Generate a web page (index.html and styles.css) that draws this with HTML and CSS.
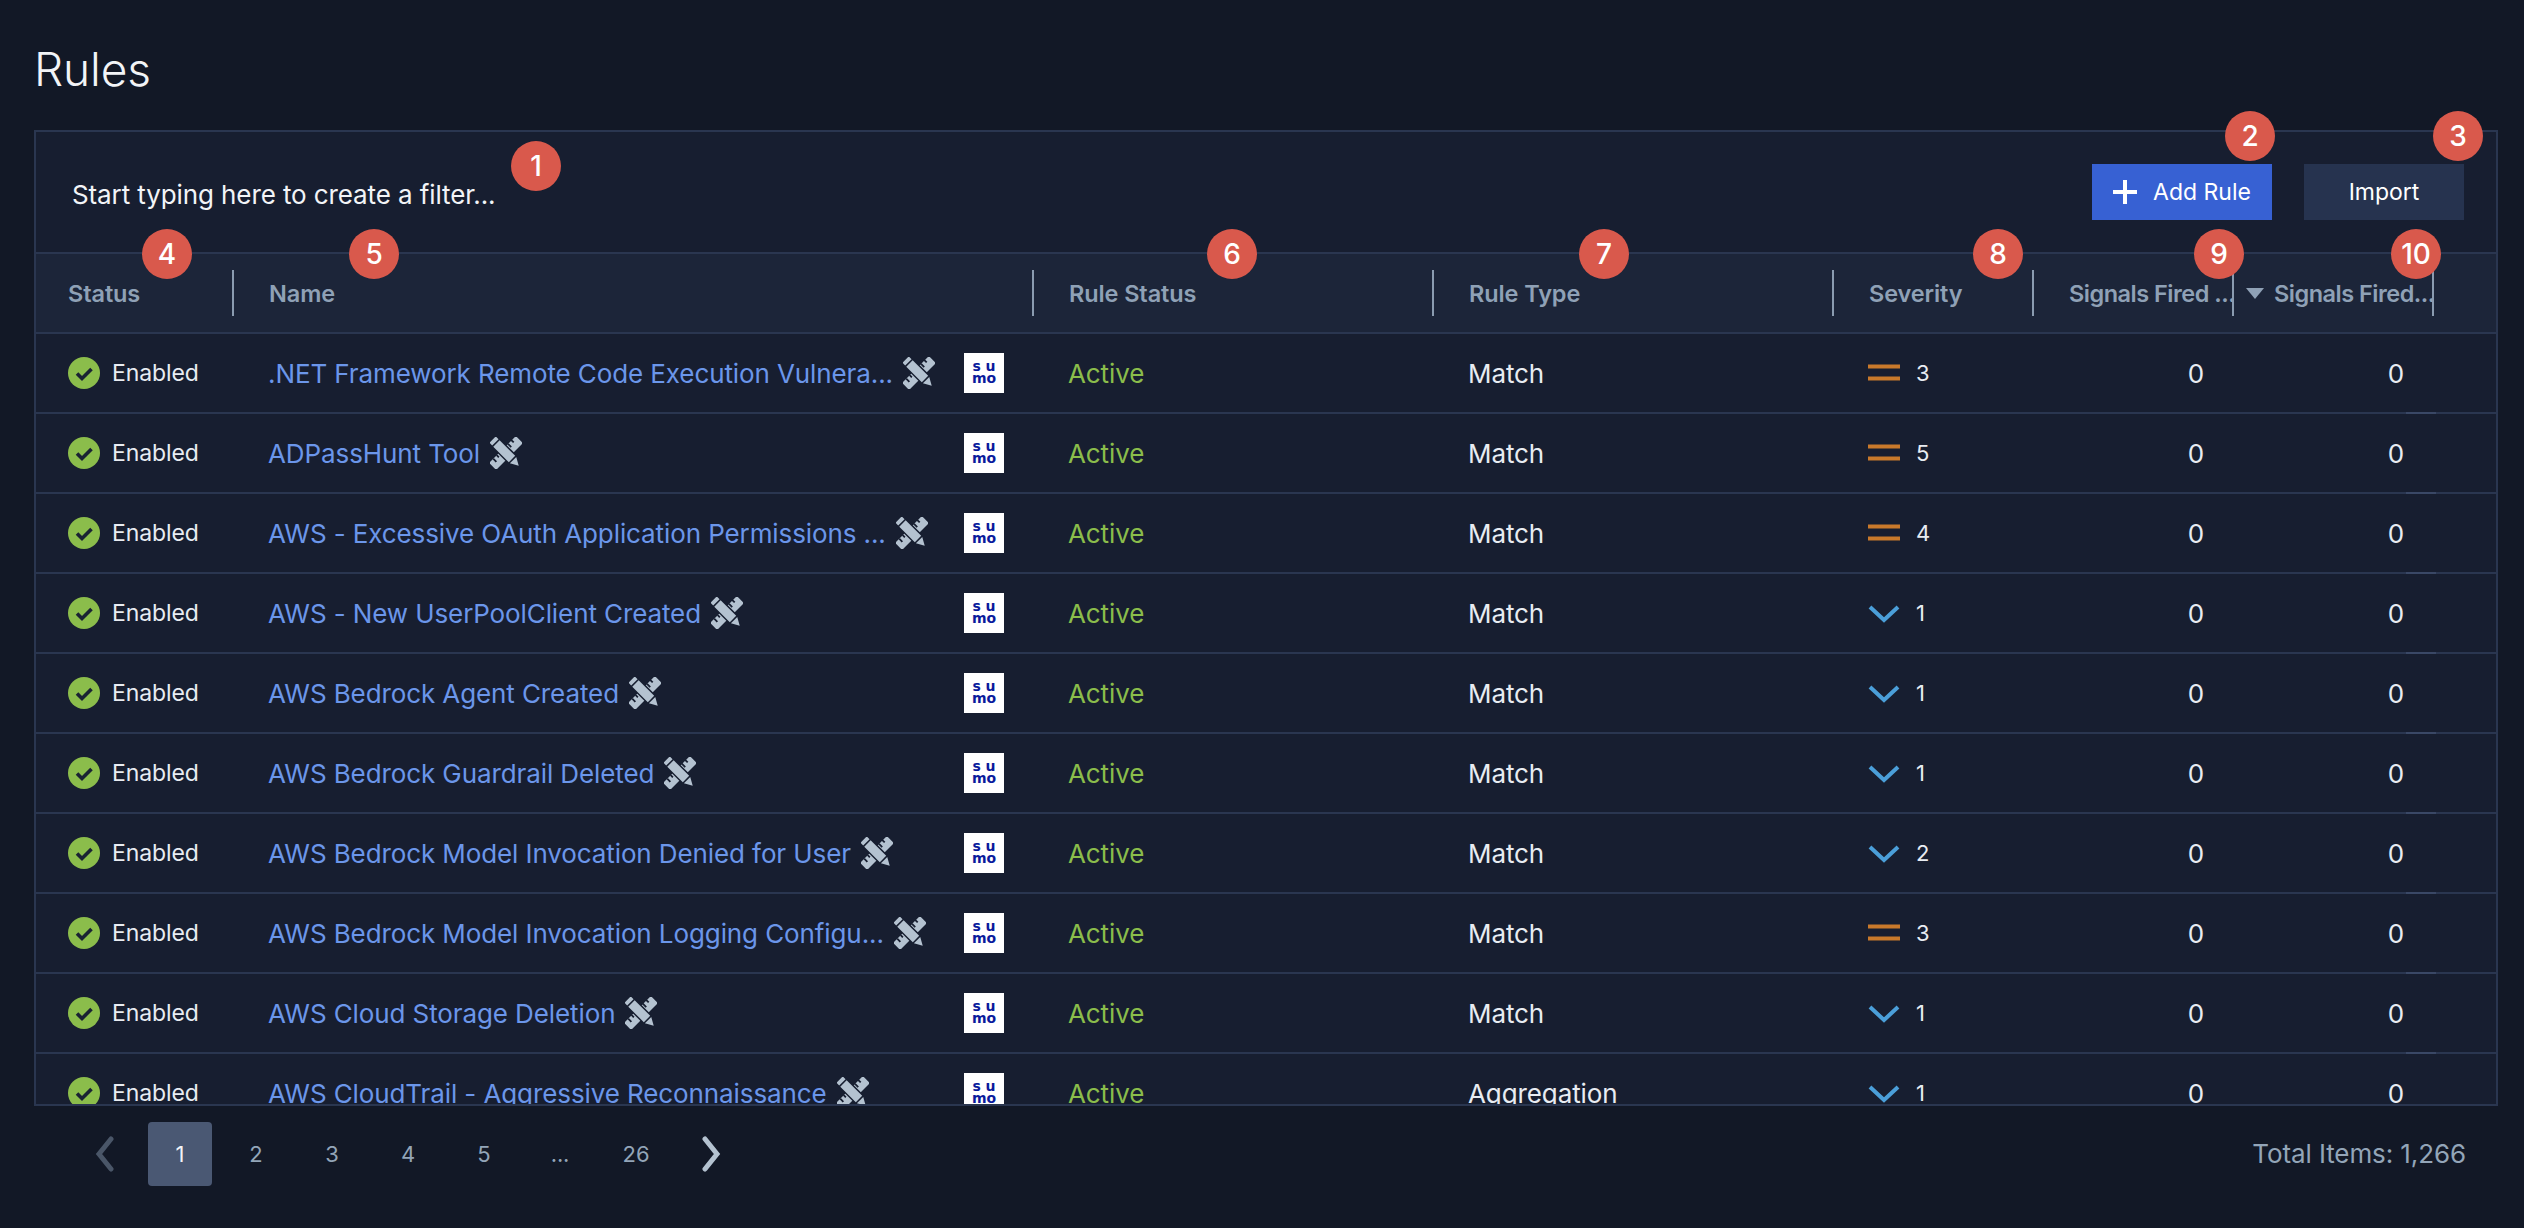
FILE: index.html
```html
<!DOCTYPE html>
<html lang="en">

<head>
    <meta charset="UTF-8">
    <meta name="viewport" content="width=device-width, initial-scale=1.0">
    <title>Rules</title>
    <link rel="stylesheet" href="styles.css">
</head>

<body>
    <svg class="defs" width="0" height="0">
        <defs>
            <symbol id="tools" viewBox="0 0 32 32">
                <g transform="rotate(-45 16 16)">
                    <path d="M-3 11h38v10H-3zM2 11v4.500h1.800V11zM7 11v3h1.800v-3zM12 11v4.500h1.800V11zM18 11v3h1.800v-3zM23 11v4.500h1.800V11zM28 11v3h1.800v-3z" fill="#b4c2d0" fill-rule="evenodd" />
                </g>
                <g transform="rotate(45 16 16)">
                    <path d="M-2 10h27v12H-2z" fill="#171e30" />
                    <path d="M-3 11.500h4v9h-4zM2.500 11.500h22v9h-22zM26 11.500l8 4.500-8 4.500z" fill="#b4c2d0" />
                </g>
            </symbol>
            <symbol id="check" viewBox="0 0 32 32">
                <circle cx="16" cy="16" r="16" fill="#8bbd4b" />
                <path d="M9 16.500l5 5 9.500-9.500" fill="none" stroke="#1a2233" stroke-width="3.600" />
            </symbol>
            <symbol id="medium" viewBox="0 0 32 32">
                <path d="M0 7.500h32v4H0zM0 19.500h32v4H0z" fill="#c8792b" />
            </symbol>
            <symbol id="low" viewBox="0 0 32 32">
                <path d="M2 10l14 13 14-13" fill="none" stroke="#4b9fd9" stroke-width="4" />
            </symbol>
        </defs>
    </svg>

    <div class="page">
        <h1>Rules</h1>

        <div class="panel">
            <div class="toolbar">
                <div class="filter">Start typing here to create a filter...</div>
                <div class="actions">
                    <button class="btn btn-primary">
                        <svg class="plus" viewBox="0 0 24 24" width="24" height="24">
                            <path d="M10 0h4v10h10v4H14v10h-4V14H0v-4h10z" fill="#fff" />
                        </svg>
                        Add Rule
                    </button>
                    <button class="btn btn-secondary">Import</button>
                </div>
            </div>

            <div class="cols head">
                <div class="th"><span class="th-in">Status</span></div>
                <div class="th"><span class="th-in">Name</span></div>
                <div class="th"><span class="th-in">Rule Status</span></div>
                <div class="th"><span class="th-in">Rule Type</span></div>
                <div class="th"><span class="th-in">Severity</span></div>
                <div class="th th-tight"><span class="th-in">Signals Fired ...</span></div>
                <div class="th th-tight th-sorted"><span class="th-in"><i class="sort"></i>Signals Fired...</span></div>
            </div>

            <div class="rows">
                <div class="cols row">
                    <div class="cell status"><svg class="ico"><use href="#check" /></svg>Enabled</div>
                    <div class="cell name"><a>.NET Framework Remote Code Execution Vulnera...</a><svg class="ico"><use href="#tools" /></svg><span class="sumo">s u<br>mo</span></div>
                    <div class="cell active">Active</div>
                    <div class="cell">Match</div>
                    <div class="cell sev"><svg class="ico"><use href="#medium" /></svg>3</div>
                    <div class="cell num">0</div>
                    <div class="cell num">0</div>
                </div>
                <div class="cols row">
                    <div class="cell status"><svg class="ico"><use href="#check" /></svg>Enabled</div>
                    <div class="cell name"><a>ADPassHunt Tool</a><svg class="ico"><use href="#tools" /></svg><span class="sumo">s u<br>mo</span></div>
                    <div class="cell active">Active</div>
                    <div class="cell">Match</div>
                    <div class="cell sev"><svg class="ico"><use href="#medium" /></svg>5</div>
                    <div class="cell num">0</div>
                    <div class="cell num">0</div>
                </div>
                <div class="cols row">
                    <div class="cell status"><svg class="ico"><use href="#check" /></svg>Enabled</div>
                    <div class="cell name"><a>AWS - Excessive OAuth Application Permissions ...</a><svg class="ico"><use href="#tools" /></svg><span class="sumo">s u<br>mo</span></div>
                    <div class="cell active">Active</div>
                    <div class="cell">Match</div>
                    <div class="cell sev"><svg class="ico"><use href="#medium" /></svg>4</div>
                    <div class="cell num">0</div>
                    <div class="cell num">0</div>
                </div>
                <div class="cols row">
                    <div class="cell status"><svg class="ico"><use href="#check" /></svg>Enabled</div>
                    <div class="cell name"><a>AWS - New UserPoolClient Created</a><svg class="ico"><use href="#tools" /></svg><span class="sumo">s u<br>mo</span></div>
                    <div class="cell active">Active</div>
                    <div class="cell">Match</div>
                    <div class="cell sev"><svg class="ico"><use href="#low" /></svg>1</div>
                    <div class="cell num">0</div>
                    <div class="cell num">0</div>
                </div>
                <div class="cols row">
                    <div class="cell status"><svg class="ico"><use href="#check" /></svg>Enabled</div>
                    <div class="cell name"><a>AWS Bedrock Agent Created</a><svg class="ico"><use href="#tools" /></svg><span class="sumo">s u<br>mo</span></div>
                    <div class="cell active">Active</div>
                    <div class="cell">Match</div>
                    <div class="cell sev"><svg class="ico"><use href="#low" /></svg>1</div>
                    <div class="cell num">0</div>
                    <div class="cell num">0</div>
                </div>
                <div class="cols row">
                    <div class="cell status"><svg class="ico"><use href="#check" /></svg>Enabled</div>
                    <div class="cell name"><a>AWS Bedrock Guardrail Deleted</a><svg class="ico"><use href="#tools" /></svg><span class="sumo">s u<br>mo</span></div>
                    <div class="cell active">Active</div>
                    <div class="cell">Match</div>
                    <div class="cell sev"><svg class="ico"><use href="#low" /></svg>1</div>
                    <div class="cell num">0</div>
                    <div class="cell num">0</div>
                </div>
                <div class="cols row">
                    <div class="cell status"><svg class="ico"><use href="#check" /></svg>Enabled</div>
                    <div class="cell name"><a>AWS Bedrock Model Invocation Denied for User</a><svg class="ico"><use href="#tools" /></svg><span class="sumo">s u<br>mo</span></div>
                    <div class="cell active">Active</div>
                    <div class="cell">Match</div>
                    <div class="cell sev"><svg class="ico"><use href="#low" /></svg>2</div>
                    <div class="cell num">0</div>
                    <div class="cell num">0</div>
                </div>
                <div class="cols row">
                    <div class="cell status"><svg class="ico"><use href="#check" /></svg>Enabled</div>
                    <div class="cell name"><a>AWS Bedrock Model Invocation Logging Configu...</a><svg class="ico"><use href="#tools" /></svg><span class="sumo">s u<br>mo</span></div>
                    <div class="cell active">Active</div>
                    <div class="cell">Match</div>
                    <div class="cell sev"><svg class="ico"><use href="#medium" /></svg>3</div>
                    <div class="cell num">0</div>
                    <div class="cell num">0</div>
                </div>
                <div class="cols row">
                    <div class="cell status"><svg class="ico"><use href="#check" /></svg>Enabled</div>
                    <div class="cell name"><a>AWS Cloud Storage Deletion</a><svg class="ico"><use href="#tools" /></svg><span class="sumo">s u<br>mo</span></div>
                    <div class="cell active">Active</div>
                    <div class="cell">Match</div>
                    <div class="cell sev"><svg class="ico"><use href="#low" /></svg>1</div>
                    <div class="cell num">0</div>
                    <div class="cell num">0</div>
                </div>
                <div class="cols row">
                    <div class="cell status"><svg class="ico"><use href="#check" /></svg>Enabled</div>
                    <div class="cell name"><a>AWS CloudTrail - Aggressive Reconnaissance</a><svg class="ico"><use href="#tools" /></svg><span class="sumo">s u<br>mo</span></div>
                    <div class="cell active">Active</div>
                    <div class="cell">Aggregation</div>
                    <div class="cell sev"><svg class="ico"><use href="#low" /></svg>1</div>
                    <div class="cell num">0</div>
                    <div class="cell num">0</div>
                </div>
            </div>
        </div>

        <div class="footer">
            <div class="pager">
                <span class="pg"><svg width="20" height="36" viewBox="0 0 20 36"><path d="M17 3L5 18l12 15" fill="none" stroke="#4a5668" stroke-width="5" stroke-linecap="round" /></svg></span>
                <span class="pg pg-current">1</span>
                <span class="pg">2</span>
                <span class="pg">3</span>
                <span class="pg">4</span>
                <span class="pg">5</span>
                <span class="pg">...</span>
                <span class="pg">26</span>
                <span class="pg"><svg width="20" height="36" viewBox="0 0 20 36"><path d="M3 3l12 15L3 33" fill="none" stroke="#b4c2d0" stroke-width="5" stroke-linecap="round" /></svg></span>
            </div>
            <div class="total">Total Items: 1,266</div>
        </div>

        <!-- Numbered callouts -->
        <span class="badge badge-1">1</span>
        <span class="badge badge-2">2</span>
        <span class="badge badge-3">3</span>
        <span class="badge badge-4">4</span>
        <span class="badge badge-5">5</span>
        <span class="badge badge-6">6</span>
        <span class="badge badge-7">7</span>
        <span class="badge badge-8">8</span>
        <span class="badge badge-9">9</span>
        <span class="badge badge-10">10</span>
    </div>
</body>

</html>
```

FILE: styles.css
```css
* {
    box-sizing: border-box;
    margin: 0;
    padding: 0;
}

body {
    background-color: #121826;
    color: #e8ecf2;
    font-family: Inter, "Open Sans", sans-serif;
    font-size: 26px;
    letter-spacing: -0.1px;
    overflow: hidden;
}

.defs {
    position: absolute;
}

.page {
    position: relative;
    height: 1228px;
    padding: 0 26px 0 34px;
}

h1 {
    height: 130px;
    padding-top: 38px;
    font-size: 46px;
    line-height: 62px;
    font-weight: 300;
    color: #f2f4f7;
}

.panel {
    height: 976px;
    background-color: #171e30;
    border: 2px solid #2a3650;
    display: flex;
    flex-direction: column;
    overflow: hidden;
}

/* Filter and buttons */
.toolbar {
    flex: none;
    height: 122px;
    padding: 0 32px 0 36px;
    display: flex;
    align-items: center;
    justify-content: space-between;
    border-bottom: 2px solid #2a3650;
}

.filter {
    color: #f2f4f7;
    padding-top: 4px;
}

.actions {
    display: flex;
    gap: 32px;
}

.btn {
    height: 56px;
    border: none;
    color: #fff;
    font-family: inherit;
    font-size: 23px;
    display: flex;
    align-items: center;
    justify-content: center;
}

.btn-primary {
    width: 180px;
    gap: 16px;
    background-color: #3761d3;
}

.btn-secondary {
    width: 160px;
    background-color: #26334f;
}

/* Table */
.cols {
    display: grid;
    grid-template-columns: 198px 800px 400px 400px 200px 200px 200px;
}

.head {
    flex: none;
    height: 80px;
    background-color: #1c2539;
    border-bottom: 2px solid #2a3650;
    align-items: center;
}

.th {
    padding-left: 35px;
    border-right: 2px solid #8a9bb0;
    height: 46px;
    display: flex;
    align-items: center;
    font-size: 23.500px;
    font-weight: 600;
    color: #8fa1b6;
    white-space: nowrap;
    overflow: hidden;
}

.th:first-child {
    padding-left: 32px;
}

.th-tight {
    letter-spacing: -0.5px;
}

.th-sorted {
    padding-left: 12px;
}

.th-in {
    display: flex;
    align-items: center;
}

.sort {
    flex: none;
    width: 0;
    height: 0;
    margin-right: 10px;
    border-left: 9px solid transparent;
    border-right: 9px solid transparent;
    border-top: 11px solid #8fa1b6;
}

.rows {
    flex: 1;
    overflow: hidden;
}

.row {
    height: 80px;
    border-bottom: 2px solid #2a3650;
    align-items: center;
    position: relative;
}

/* little scrollbar-like bit on the row line */
.row::after {
    content: "";
    position: absolute;
    left: 2370px;
    bottom: -2px;
    width: 30px;
    height: 2px;
    background-color: #3a4866;
}

.cell {
    padding-left: 34px;
    display: flex;
    align-items: center;
    white-space: nowrap;
}

.status {
    padding-left: 32px;
    gap: 12px;
    font-size: 23px;
}

.ico {
    flex: none;
    width: 32px;
    height: 32px;
}

.name {
    gap: 10px;
    padding-right: 30px;
}

.name a {
    color: #6b96ea;
}

.sumo {
    margin-left: auto;
    flex: none;
    width: 40px;
    height: 40px;
    background-color: #fff;
    color: #0a1a9c;
    font-family: "DejaVu Sans", sans-serif;
    font-size: 14px;
    font-weight: 700;
    line-height: 12px;
    text-align: center;
    padding-top: 7px;
}

.active {
    color: #8bbd4b;
}

.sev {
    gap: 16px;
    font-size: 22px;
}

.num {
    justify-content: flex-end;
    padding-right: 30px;
}

/* Pagination */
.footer {
    padding-top: 16px;
    padding-left: 38px;
    padding-right: 32px;
    display: flex;
    justify-content: space-between;
    align-items: flex-start;
}

.pager {
    display: flex;
    gap: 12px;
}

.pg {
    width: 64px;
    height: 64px;
    border-radius: 4px;
    display: flex;
    align-items: center;
    justify-content: center;
    color: #93a5b8;
    font-size: 22px;
}

.pg-current {
    background-color: #4a5873;
    color: #f2f4f7;
}

.total {
    line-height: 64px;
    color: #93a5b8;
}

/* Callouts */
.badge {
    position: absolute;
    width: 50px;
    height: 50px;
    border-radius: 50%;
    background-color: #d9594c;
    color: #fff;
    font-size: 28px;
    font-weight: 500;
    display: flex;
    align-items: center;
    justify-content: center;
}

.badge-1 { left: 511px; top: 141px; }
.badge-2 { left: 2225px; top: 111px; }
.badge-3 { left: 2433px; top: 111px; }
.badge-4 { left: 142px; top: 229px; }
.badge-5 { left: 349px; top: 229px; }
.badge-6 { left: 1207px; top: 229px; }
.badge-7 { left: 1579px; top: 229px; }
.badge-8 { left: 1973px; top: 229px; }
.badge-9 { left: 2194px; top: 229px; }
.badge-10 { left: 2391px; top: 229px; }
```
